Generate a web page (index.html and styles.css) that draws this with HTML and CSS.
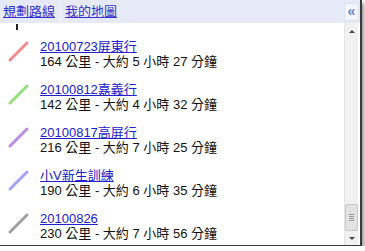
FILE: index.html
```html
<!DOCTYPE html>
<html lang="zh-Hant">
<head>
<meta charset="UTF-8">
<title>我的地圖</title>
<link rel="stylesheet" href="styles.css">
</head>
<body>

<div class="frame">
    <div class="header">
        <a class="tab" href="#">規劃路線</a>
        <span class="sep"></span>
        <a class="tab" href="#">我的地圖</a>
        <span class="collapse">&laquo;</span>
    </div>
    <div class="content">
        <div class="list">
            <span class="cutoff"></span>
            <div class="item">
                <svg class="icon" width="40" height="30"><line x1="10" y1="21" x2="27" y2="4" stroke="#f38b8b"/></svg>
                <div class="info">
                    <a href="#">20100723屏東行</a>
                    <div class="detail">164 公里 - 大約 5 小時 27 分鐘</div>
                </div>
            </div>
            <div class="item">
                <svg class="icon" width="40" height="30"><line x1="10" y1="21" x2="27" y2="4" stroke="#92df7c"/></svg>
                <div class="info">
                    <a href="#">20100812嘉義行</a>
                    <div class="detail">142 公里 - 大約 4 小時 32 分鐘</div>
                </div>
            </div>
            <div class="item">
                <svg class="icon" width="40" height="30"><line x1="10" y1="21" x2="27" y2="4" stroke="#b98ae6"/></svg>
                <div class="info">
                    <a href="#">20100817高屏行</a>
                    <div class="detail">216 公里 - 大約 7 小時 25 分鐘</div>
                </div>
            </div>
            <div class="item">
                <svg class="icon" width="40" height="30"><line x1="10" y1="21" x2="27" y2="4" stroke="#a3a3f5"/></svg>
                <div class="info">
                    <a href="#">小V新生訓練</a>
                    <div class="detail">190 公里 - 大約 6 小時 35 分鐘</div>
                </div>
            </div>
            <div class="item">
                <svg class="icon" width="40" height="30"><line x1="10" y1="21" x2="27" y2="4" stroke="#a0a0a0"/></svg>
                <div class="info">
                    <a href="#">20100826</a>
                    <div class="detail">230 公里 - 大約 7 小時 56 分鐘</div>
                </div>
            </div>
        </div>
        <div class="scrollbar">
            <span class="arrow up"></span>
            <span class="track"></span>
            <span class="thumb"><i></i><i></i><i></i><i></i></span>
            <span class="arrow down"></span>
        </div>
    </div>
</div>

</body>
</html>
```

FILE: styles.css
```css
body {
    margin: 0;
    padding: 0;
    background-color: #fff;
    font-family: "Liberation Sans", Arial, "Noto Sans CJK TC", sans-serif;
}
.frame {
    width: 360px;
    height: 245px;
    border-right: 2px solid #3a3a3a;
    border-bottom: 1px solid #3a3a3a;
    box-shadow: 2px 3px 4px rgba(0, 0, 0, 0.45);
    display: flex;
    flex-direction: column;
    overflow: hidden;
    background-color: #fff;
}
.header {
    height: 23px;
    flex: none;
    display: flex;
    align-items: center;
    background-color: #e6eaf8;
    padding-left: 3px;
    font-size: 13px;
}
.tab {
    color: #3333cc;
    text-decoration: underline;
    line-height: 15px;
    margin-top: -1px;
}
.sep {
    width: 1px;
    height: 20px;
    background-color: #f6f7fd;
    margin: 0 4px 0 5px;
}
.collapse {
    margin-left: auto;
    width: 13px;
    height: 16px;
    margin-right: 1px;
    border: 1px solid #dde3f5;
    background-color: #f3f5fd;
    color: #6a86cc;
    font-size: 14px;
    font-weight: bold;
    line-height: 14px;
    text-align: center;
}
.content {
    flex: 1;
    display: flex;
    min-height: 0;
}
.list {
    flex: 1;
    padding-top: 16px;
    position: relative;
}
.cutoff {
    position: absolute;
    left: 16px;
    top: 1px;
    width: 2px;
    height: 6px;
    background-color: #222;
}
.item {
    display: flex;
    height: 30px;
    margin-bottom: 13px;
}
.icon {
    flex: none;
    stroke-width: 3;
    stroke-linecap: round;
}
.info {
    font-size: 13px;
    line-height: 15px;
    color: #111;
    white-space: nowrap;
}
.info a {
    display: block;
    color: #2020cc;
    text-decoration: underline;
}
.scrollbar {
    width: 13px;
    flex: none;
    margin-right: 2px;
    display: flex;
    flex-direction: column;
    align-items: center;
    background-color: #f1f1f1;
    border-left: 1px solid #e4e4e4;
}
.arrow {
    width: 0;
    height: 0;
    border-left: 3px solid transparent;
    border-right: 3px solid transparent;
    flex: none;
}
.arrow.up {
    border-bottom: 3px solid #444;
    margin-top: 7px;
}
.arrow.down {
    border-top: 3px solid #444;
    margin: 6px 0 5px;
}
.track {
    flex: 1;
}
.thumb {
    width: 11px;
    height: 25px;
    border: 1px solid #c8c8c8;
    border-radius: 2px;
    background-color: #e2e2e2;
    display: flex;
    flex-direction: column;
    align-items: center;
    justify-content: center;
    gap: 1px;
}
.thumb i {
    width: 5px;
    height: 1px;
    background-color: #999;
}
```
